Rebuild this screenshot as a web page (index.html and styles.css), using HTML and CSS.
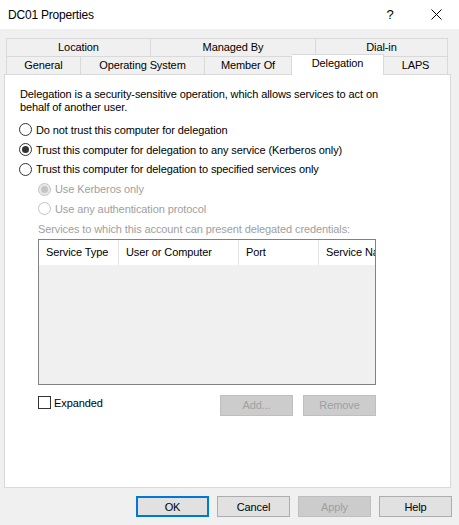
FILE: index.html
```html
<!DOCTYPE html>
<html>
<head>
<meta charset="utf-8">
<title>DC01 Properties</title>
<link rel="stylesheet" href="styles.css">
</head>
<body>
<div class="window">
  <div class="titlebar">
    <span class="title">DC01 Properties</span>
    <span class="tb-btn help-q">?</span>
    <span class="tb-btn close-x">
      <svg width="11" height="11" viewBox="0 0 11 11"><path d="M0.5 0.5 L10.5 10.5 M10.5 0.5 L0.5 10.5" stroke="#000" stroke-width="1" fill="none"/></svg>
    </span>
  </div>

  <div class="tabs">
    <div class="tab-row back">
      <div class="tab w145">Location</div>
      <div class="tab w165">Managed By</div>
      <div class="tab w132">Dial-in</div>
    </div>
    <div class="tab-row front">
      <div class="tab w75">General</div>
      <div class="tab w124">Operating System</div>
      <div class="tab w87">Member Of</div>
      <div class="tab w92 active">Delegation</div>
      <div class="tab w64">LAPS</div>
    </div>
  </div>

  <div class="panel">
    <p class="desc">Delegation is a security-sensitive operation, which allows services to act on behalf of another user.</p>
    <div class="options">
      <div class="opt"><span class="radio"></span><span>Do not trust this computer for delegation</span></div>
      <div class="opt"><span class="radio checked"></span><span>Trust this computer for delegation to any service (Kerberos only)</span></div>
      <div class="opt"><span class="radio"></span><span>Trust this computer for delegation to specified services only</span></div>
      <div class="opt sub disabled"><span class="radio checked"></span><span>Use Kerberos only</span></div>
      <div class="opt sub disabled"><span class="radio"></span><span>Use any authentication protocol</span></div>
    </div>
    <div class="svc-label">Services to which this account can present delegated credentials:</div>
    <div class="listview">
      <div class="lv-head">
        <div class="col c1">Service Type</div>
        <div class="col c2">User or Computer</div>
        <div class="col c3">Port</div>
        <div class="col c4">Service Na</div>
      </div>
      <div class="lv-body"></div>
    </div>
    <div class="list-actions">
      <label class="check"><span class="box"></span><span>Expanded</span></label>
      <div class="action-btns">
        <span class="btn disabled">Add...</span>
        <span class="btn disabled">Remove</span>
      </div>
    </div>
  </div>

  <div class="footer">
    <span class="btn default">OK</span>
    <span class="btn">Cancel</span>
    <span class="btn disabled">Apply</span>
    <span class="btn">Help</span>
  </div>
</div>
</body>
</html>
```

FILE: styles.css
```css
* { box-sizing: border-box; }
html, body { margin: 0; padding: 0; }
body {
  width: 459px;
  height: 525px;
  background: #f0f0f0;
  font-family: "Liberation Sans", Arial, sans-serif;
  font-size: 11px;
  letter-spacing: -0.1px;
  color: #000;
  overflow: hidden;
}
.window { width: 459px; height: 525px; display: flex; flex-direction: column; }

.titlebar {
  height: 29px;
  background: #fff;
  display: flex;
  align-items: center;
  padding-left: 8px;
}
.title { flex: 1; font-size: 12px; letter-spacing: -0.2px; }
.tb-btn {
  width: 46px;
  height: 29px;
  display: flex;
  align-items: center;
  justify-content: center;
}
.help-q { font-size: 13px; }

.tabs { margin: 9px 0 0 6px; width: 442px; }
.tab-row { display: flex; height: 18px; }
.tab-row.front { height: 18px; align-items: flex-end; }
.tab {
  height: 18px;
  border: 1px solid #d9d9d9;
  border-left-width: 0;
  background: #f0f0f0;
  display: flex;
  align-items: center;
  justify-content: center;
  line-height: 1;
}
.tab:first-child { border-left-width: 1px; }
.tab-row.back .tab { border-bottom: none; }
.tab-row.front .tab { border-bottom: none; }
.tab.active {
  background: #fff;
  height: 21px;
  margin-top: -3px;
  margin-bottom: -1px;
  position: relative;
  z-index: 2;
  align-items: flex-start;
  padding-top: 3px;
}
.w145 { width: 145px; }
.w165 { width: 165px; }
.w132 { width: 132px; }
.w75 { width: 75px; }
.w124 { width: 124px; }
.w87 { width: 87px; }
.w92 { width: 92px; }
.w64 { width: 64px; }

.panel {
  margin-left: 4px;
  width: 447px;
  height: 414px;
  background: #fff;
  border: 1px solid #d9d9d9;
  padding: 13px 0 0 15px;
}
.desc { margin: 0; line-height: 13px; width: 362px; }
.options { margin-top: 6px; margin-left: -1px; }
.opt { height: 19.75px; display: flex; align-items: center; gap: 4px; }
.opt.sub { padding-left: 19px; }
.opt.disabled { color: #a0a0a0; }
.radio {
  width: 13px;
  height: 13px;
  border: 1px solid #333;
  border-radius: 50%;
  background: #fff;
  display: inline-flex;
  align-items: center;
  justify-content: center;
  flex: none;
}
.radio.checked::after {
  content: "";
  width: 7px;
  height: 7px;
  border-radius: 50%;
  background: #333;
}
.disabled .radio { border-color: #c4c4c4; }
.disabled .radio.checked { background: #e8e8e8; }
.disabled .radio.checked::after { background: #c4c4c4; }

.svc-label { margin: 3px 0 0 18px; color: #a0a0a0; line-height: 14px; }
.listview {
  margin: 3px 0 0 18px;
  width: 338px;
  height: 146px;
  border: 1px solid #828282;
  background: #f0f0f0;
  display: flex;
  flex-direction: column;
}
.lv-head { height: 25px; background: #fff; display: flex; }
.col {
  height: 25px;
  display: flex;
  align-items: center;
  padding-left: 7px;
  border-right: 1px solid #e5e5e5;
  white-space: nowrap;
  overflow: hidden;
}
.c1 { width: 80px; }
.c2 { width: 120px; }
.c3 { width: 80px; }
.c4 { flex: 1; border-right: none; }
.lv-body { flex: 1; }

.list-actions {
  margin: 10px 0 0 18px;
  width: 338px;
  display: flex;
  justify-content: space-between;
  align-items: flex-start;
}
.check { display: flex; align-items: center; gap: 3px; height: 14px; margin-top: 1px; }
.box {
  width: 13px;
  height: 13px;
  border: 1px solid #333;
  background: #fff;
  display: inline-block;
}
.action-btns { display: flex; gap: 10px; }

.btn {
  width: 73px;
  height: 21px;
  background: #e1e1e1;
  border: 1px solid #adadad;
  display: flex;
  align-items: center;
  justify-content: center;
}
.btn.disabled { background: #cccccc; border-color: #bfbfbf; color: #a0a0a0; }
.btn.default { border: 2px solid #0078d7; }

.footer {
  display: flex;
  justify-content: flex-end;
  gap: 8px;
  padding-right: 7px;
  margin-top: 8px;
}
```
